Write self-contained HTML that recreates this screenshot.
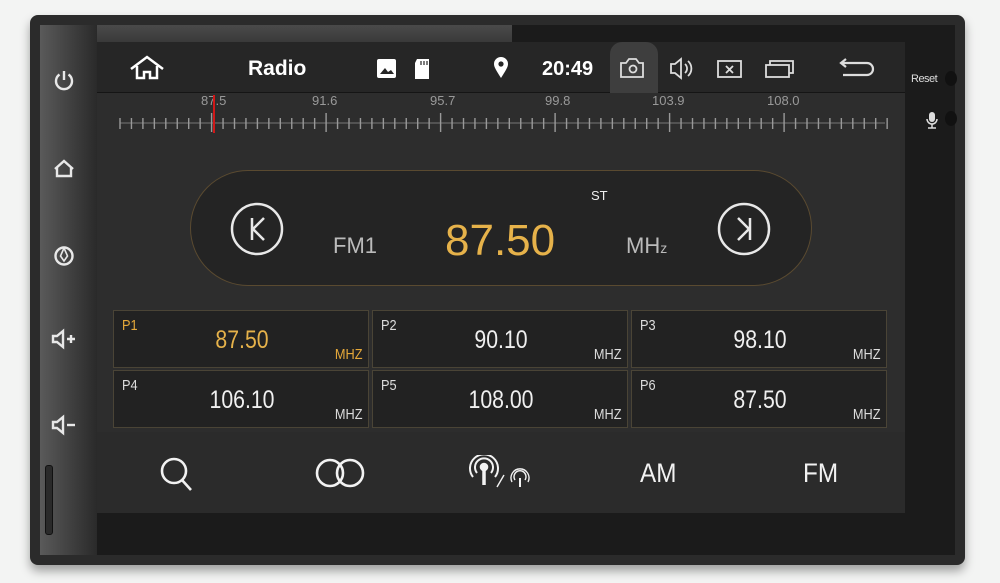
<!DOCTYPE html>
<html><head><meta charset="utf-8"><style>
*{margin:0;padding:0;box-sizing:border-box}
body{width:1000px;height:583px;background:#f3f4f3;position:relative;overflow:hidden;font-family:"Liberation Sans",sans-serif;color:#eee}
.abs{position:absolute}
.frame{left:30px;top:15px;width:935px;height:550px;background:#2b2b2b;border-radius:8px;box-shadow:0 6px 10px rgba(0,0,0,.35)}
.glass{left:40px;top:25px;width:915px;height:530px;background:#1b1b1b}
.bezel{left:40px;top:25px;width:57px;height:530px;background:linear-gradient(90deg,#5a5a5a,#3d3d3d 60%,#2a2a2a)}
.topbez{left:97px;top:25px;width:415px;height:17px;background:linear-gradient(180deg,#4a4a4a,#3a3a3a)}
.screen{left:97px;top:42px;width:808px;height:471px;background:#2d2d2d}
.status{left:97px;top:42px;width:808px;height:51px;background:#262626;border-bottom:1px solid #151515}
.t{position:absolute;white-space:nowrap}
.pill{left:190px;top:170px;width:622px;height:116px;border-radius:58px;background:#242424;border:1px solid #5a4a30}
.cell{position:absolute;width:256px;height:58px;background:#222;border:1px solid #4a4436}
.cell .p{position:absolute;left:8px;top:6px;font-size:15px;color:#ddd;transform:scaleX(.85);transform-origin:left}
.cell .f{position:absolute;left:0;width:256px;text-align:center;top:15px;font-size:25px;color:#f0f0f0;transform:scaleX(.85)}
.cell .m{position:absolute;right:6px;bottom:4px;font-size:15px;color:#ddd;transform:scaleX(.85);transform-origin:right}
.bottom{left:97px;top:432px;width:808px;height:81px;background:#2b2b2b}
</style></head><body>
<div class="abs frame"></div>
<div class="abs glass"></div>
<div class="abs bezel"></div>
<div class="abs topbez"></div>
<div class="abs" style="left:45px;top:465px;width:8px;height:70px;border:1px solid #111;border-radius:3px;background:#2a2a2a"></div>
<svg class="abs" style="left:50px;top:65px" width="30" height="400" fill="none" stroke="#e8e8e8" stroke-width="2.4">
 <path d="M9.5 9.5a8 8 0 1 0 9 0"/><path d="M14 6v9"/>
 <path d="M5 104l9-8 9 8M7 102v9h14v-9"/>
 <circle cx="14" cy="191" r="8.5"/><path d="M14 183l-3.5 8 3.5 5 3.5-5z" stroke-width="1.6"/>
 <path d="M3 271h4l6-5v16l-6-5H3z"/><path d="M17 274h8M21 270v8"/>
 <path d="M3 357h4l6-5v16l-6-5H3z"/><path d="M17 360h8"/>
</svg>
<div class="abs screen"></div>
<div class="abs status"></div>
<svg class="abs" style="left:128px;top:54px" width="40" height="30" fill="none" stroke="#fff" stroke-width="2.5"><path d="M3 15L19 3 35 15M9 12v12h7v-6h6v6h7V12"/></svg>
<div class="t" style="left:248px;top:57px;font-size:21px;font-weight:bold;color:#fff">Radio</div>
<svg class="abs" style="left:376px;top:58px" width="60" height="22"><rect x="1" y="1" width="19" height="19" rx="2" fill="#fff"/><path d="M4 16l5-6 3 4 3-2 3 4z" fill="#262626"/><path d="M41 1h12v20H39V5z" fill="#fff"/><path d="M45 3v4M48 3v4M51 3v4" stroke="#262626" stroke-width="1.2"/></svg>
<svg class="abs" style="left:492px;top:56px" width="20" height="24"><path d="M9 22C4 14 2 11 2 8a7 7 0 0 1 14 0c0 3-2 6-7 14z" fill="#fff"/><circle cx="9" cy="8" r="2.6" fill="#262626"/></svg>
<div class="t" style="left:542px;top:58px;font-size:20px;font-weight:bold;color:#fff">20:49</div>
<div class="abs" style="left:610px;top:42px;width:48px;height:51px;background:#3e3e3e;border-radius:12px 12px 0 0"></div>
<svg class="abs" style="left:618px;top:55px" width="260" height="28" fill="none" stroke="#ddd" stroke-width="1.8">
 <path d="M3 8h5l3-4h7l3 4h4v14H3z"/><circle cx="15" cy="14" r="3.5"/>
 <path d="M53 9h4l6-5v19l-6-5h-4z"/><path d="M67 9a6 6 0 0 1 0 9M70 6a10 10 0 0 1 0 15"/>
 <rect x="100" y="6" width="23" height="16"/><path d="M108 11l7 7M115 11l-7 7"/>
 <rect x="148" y="10" width="23" height="12"/><path d="M152 10V6h23v12h-4"/>
 <path d="M225 20h24a6 6 0 0 0 0-12h-26M228 4l-5 4 5 4" stroke-width="2.2"/>
</svg>
<div class="t" style="left:911px;top:73px;font-size:11px;color:#ddd;letter-spacing:-.5px">Reset</div>
<div class="abs" style="left:945px;top:71px;width:12px;height:15px;border-radius:50%;background:#111"></div>
<div class="abs" style="left:945px;top:111px;width:12px;height:15px;border-radius:50%;background:#111"></div>
<svg class="abs" style="left:925px;top:111px" width="14" height="20"><rect x="4" y="1" width="6" height="10" rx="3" fill="#ddd"/><path d="M2 8a5 5 0 0 0 10 0M7 13v4M3 17h8" stroke="#ddd" stroke-width="1.5" fill="none"/></svg>
<div class="t" style="left:201px;top:93px;font-size:13px;color:#999">87.5</div>
<div class="t" style="left:312px;top:93px;font-size:13px;color:#999">91.6</div>
<div class="t" style="left:430px;top:93px;font-size:13px;color:#999">95.7</div>
<div class="t" style="left:545px;top:93px;font-size:13px;color:#999">99.8</div>
<div class="t" style="left:652px;top:93px;font-size:13px;color:#999">103.9</div>
<div class="t" style="left:767px;top:93px;font-size:13px;color:#999">108.0</div>
<svg class="abs" style="left:100px;top:110px" width="800" height="25" id="sc"></svg>
<div class="abs" style="left:213px;top:95px;width:2px;height:38px;background:#d01818"></div>
<div class="abs pill"></div>
<svg class="abs" style="left:230px;top:202px" width="600" height="56" fill="none" stroke="#e8e8e8" stroke-width="2.5">
 <circle cx="27" cy="27" r="25"/><path d="M22 16v22M34 16l-11 11 11 11"/>
 <circle cx="514" cy="27" r="25"/><path d="M520 16v22M508 16l11 11-11 11"/>
</svg>
<div class="t" style="left:333px;top:233px;font-size:22px;color:#bbb">FM1</div>
<div class="t" style="left:445px;top:216px;font-size:44px;color:#e6b24a">87.50</div>
<div class="t" style="left:591px;top:188px;font-size:13px;color:#eee">ST</div>
<div class="t" style="left:626px;top:233px;font-size:22px;color:#bbb">MH<span style="font-size:14px">z</span></div>
<div class="cell" style="left:113px;top:310px"><span class="p" style="color:#e6a93a">P1</span><span class="f" style="color:#e6b24a">87.50</span><span class="m" style="color:#e6a93a">MHZ</span></div>
<div class="cell" style="left:372px;top:310px"><span class="p">P2</span><span class="f">90.10</span><span class="m">MHZ</span></div>
<div class="cell" style="left:631px;top:310px"><span class="p">P3</span><span class="f">98.10</span><span class="m">MHZ</span></div>
<div class="cell" style="left:113px;top:370px"><span class="p">P4</span><span class="f">106.10</span><span class="m">MHZ</span></div>
<div class="cell" style="left:372px;top:370px"><span class="p">P5</span><span class="f">108.00</span><span class="m">MHZ</span></div>
<div class="cell" style="left:631px;top:370px"><span class="p">P6</span><span class="f">87.50</span><span class="m">MHZ</span></div>
<div class="abs bottom"></div>
<svg class="abs" style="left:155px;top:455px" width="400" height="40" fill="none" stroke="#f2f2f2" stroke-width="2.6">
 <circle cx="19" cy="16" r="12"/><path d="M27 25l9 10"/>
 <circle cx="175" cy="18" r="13"/><circle cx="195" cy="18" r="13"/>
 <path d="M329 30V14" stroke-width="3.5"/><circle cx="329" cy="12" r="3" fill="#f2f2f2"/>
 <path d="M322 18a9 9 0 1 1 14 0M318 22a14 14 0 1 1 22 0" stroke-width="2"/>
 <path d="M342 32l7-12" stroke-width="1.4"/>
 <path d="M365 32v-9" stroke-width="2"/><path d="M360 25a6 6 0 1 1 10 0M357 27a9 9 0 1 1 16 0" stroke-width="1.4"/>
</svg>
<div class="t" style="left:640px;top:458px;font-size:27px;color:#f2f2f2;transform:scaleX(.9);transform-origin:left">AM</div>
<div class="t" style="left:803px;top:458px;font-size:27px;color:#f2f2f2;transform:scaleX(.9);transform-origin:left">FM</div>
<script>
var s=document.getElementById('sc'),h='';
h+='<line x1="20" y1="13" x2="785" y2="13" stroke="#777" stroke-width="1"/>';
for(var i=0;i<=67;i++){var x=20+i*11.45;var maj=((i-8)%10===0&&i>=8);
h+='<line x1="'+x+'" x2="'+x+'" y1="'+(maj?3:8)+'" y2="'+(maj?22:19)+'" stroke="#999" stroke-width="1.4"/>';}
s.innerHTML=h;
</script>
</body></html>
